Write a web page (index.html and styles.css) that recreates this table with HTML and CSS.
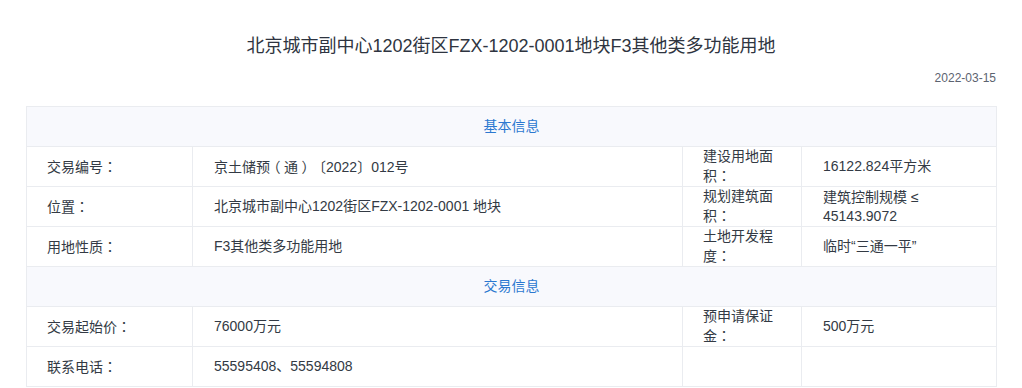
FILE: index.html
```html
<!DOCTYPE html>
<html lang="zh-CN">
<head>
<meta charset="utf-8">
<title>北京城市副中心1202街区FZX-1202-0001地块F3其他类多功能用地</title>
<link rel="stylesheet" href="styles.css">
</head>
<body>
<div class="page">
  <h1 class="title">北京城市副中心1202街区FZX-1202-0001地块F3其他类多功能用地</h1>
  <div class="date">2022-03-15</div>
  <table class="info">
    <colgroup>
      <col class="c1"><col class="c2"><col class="c3"><col class="c4">
    </colgroup>
    <tbody>
      <tr class="section"><td colspan="4">基本信息</td></tr>
      <tr>
        <td class="label">交易编号<span class="p" lang="zh-TW">：</span></td>
        <td class="value">京土储预<span class="br">（</span>通<span class="br">）</span>〔2022〕012号</td>
        <td class="label">建设用地面积<span class="p" lang="zh-TW">：</span></td>
        <td class="value">16122.824平方米</td>
      </tr>
      <tr>
        <td class="label">位置<span class="p" lang="zh-TW">：</span></td>
        <td class="value">北京城市副中心1202街区FZX-1202-0001 地块</td>
        <td class="label">规划建筑面积<span class="p" lang="zh-TW">：</span></td>
        <td class="value">建筑控制规模 ≤ 45143.9072</td>
      </tr>
      <tr>
        <td class="label">用地性质<span class="p" lang="zh-TW">：</span></td>
        <td class="value">F3其他类多功能用地</td>
        <td class="label">土地开发程度<span class="p" lang="zh-TW">：</span></td>
        <td class="value">临时“三通一平”</td>
      </tr>
      <tr class="section"><td colspan="4">交易信息</td></tr>
      <tr>
        <td class="label">交易起始价<span class="p" lang="zh-TW">：</span></td>
        <td class="value">76000万元</td>
        <td class="label">预申请保证金<span class="p" lang="zh-TW">：</span></td>
        <td class="value">500万元</td>
      </tr>
      <tr>
        <td class="label">联系电话<span class="p" lang="zh-TW">：</span></td>
        <td class="value">55595408、55594808</td>
        <td class="label"></td>
        <td class="value"></td>
      </tr>
    </tbody>
  </table>
</div>
</body>
</html>
```

FILE: styles.css
```css
html, body {
  margin: 0;
  padding: 0;
  background: #ffffff;
}

body {
  font-family: "Liberation Sans", "Noto Sans CJK SC", sans-serif;
  color: #333a44;
  text-spacing-trim: space-all;
}

.page {
  width: 970px;
  margin: 0 auto;
  padding-top: 34px;
}

.title {
  margin: 0;
  font-size: 18px;
  line-height: 24px;
  font-weight: normal;
  text-align: center;
  color: #2e3440;
}

.date {
  margin-top: 12px;
  font-size: 12px;
  line-height: 16px;
  text-align: right;
  color: #5c6370;
}

.info {
  margin-top: 20px;
  width: 970px;
  table-layout: fixed;
  border-collapse: collapse;
  font-size: 14px;
}

.c1 { width: 166px; }
.c2 { width: 490px; }
.c3 { width: 119px; }
.c4 { width: 195px; }

.info td {
  border: 1px solid #eaecf0;
  height: 40px;
  box-sizing: border-box;
  padding: 0 20px;
  line-height: 19px;
  vertical-align: middle;
  word-break: normal;
}

.info .value {
  padding-left: 21px;
}

.p {
  font-family: "Noto Sans CJK TC", "Noto Sans CJK SC", sans-serif;
}

.br {
  font-family: "Noto Sans CJK SC", sans-serif;
  font-feature-settings: "halt" 1;
  padding: 0 0.25em;
}

.section td {
  background: #f8f9fd;
  color: #2b78d0;
  text-align: center;
}
```
